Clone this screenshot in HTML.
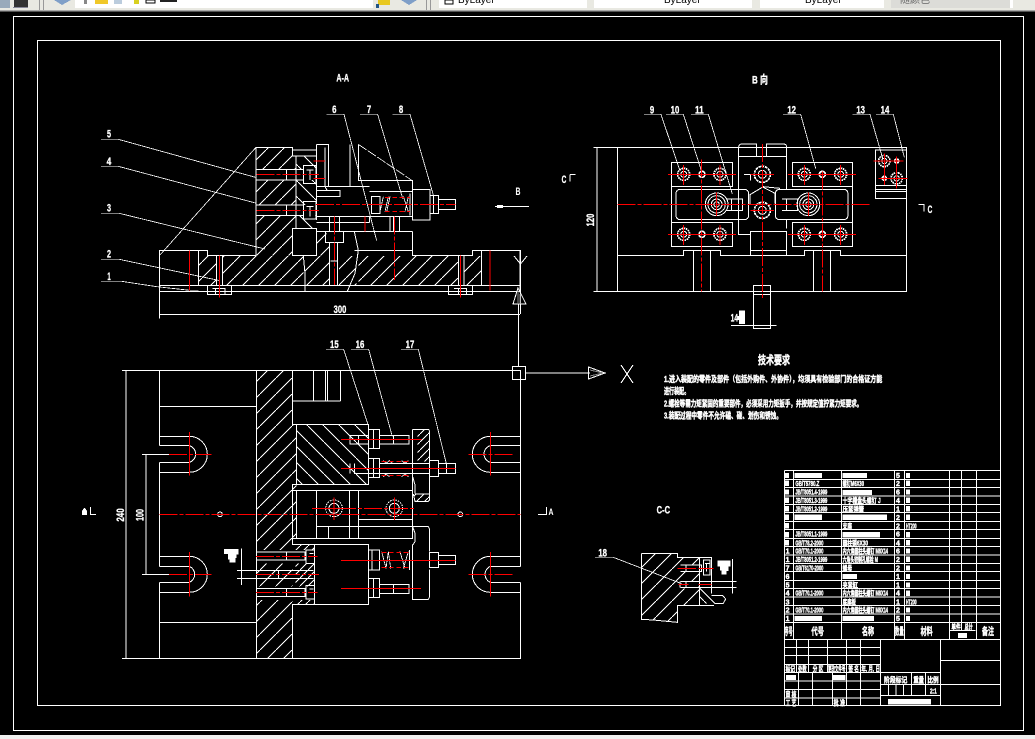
<!DOCTYPE html>
<html><head><meta charset="utf-8"><style>
html,body{margin:0;padding:0;background:#000;width:1035px;height:739px;overflow:hidden}
svg{display:block;position:absolute;left:0;top:0}
.a *{shape-rendering:crispEdges}
.w{stroke:#fff;stroke-width:3;fill:none}
.t{stroke:#fff;stroke-width:2.4;fill:none}
.r{stroke:#f00;stroke-width:3;fill:none}
.d{stroke:#f00;stroke-width:3;fill:none;stroke-dasharray:54 6 12 6}
.s{stroke:#f00;stroke-width:3;fill:none;stroke-dasharray:14 8}
.f{fill:#fff;stroke:none}
text{fill:#fff;font-family:"Liberation Sans","Noto Sans CJK SC",sans-serif;font-weight:bold}
.l{font-size:34px;text-anchor:middle;stroke:#fff;stroke-width:1}
.h{stroke:#fff;stroke-width:1.4}
</style></head><body>
<svg class="a" width="1035" height="739" viewBox="0 0 1035 739" xmlns="http://www.w3.org/2000/svg">
<defs>
<pattern id="h" patternUnits="userSpaceOnUse" width="48" height="48"><path d="M-3 51L51 -3" stroke="#fff" stroke-width="3"/></pattern>
<pattern id="g" patternUnits="userSpaceOnUse" width="48" height="48"><path d="M-3 -3L51 51" stroke="#fff" stroke-width="3"/></pattern>
<pattern id="i" patternUnits="userSpaceOnUse" width="24" height="24"><path d="M-3 27L27 -3" stroke="#fff" stroke-width="3"/></pattern>
</defs>
<rect width="1035" height="739" fill="#000"/>
<!-- toolbar -->
<rect width="1035" height="10" fill="#e9e9e2"/>
<rect y="10" width="1035" height="1" fill="#a8a8a8"/>
<rect y="11" width="1035" height="1" fill="#555"/>
<rect x="0" y="0" width="10" height="8" fill="#9ab"/><rect x="14" y="0" width="14" height="7" fill="#333"/>
<rect x="13" y="7" width="15" height="1" fill="#889"/>
<rect x="39" y="0" width="1" height="10" fill="#999"/><rect x="43" y="0" width="1" height="10" fill="#999"/><rect x="426" y="0" width="1" height="10" fill="#999"/><rect x="430" y="0" width="1" height="10" fill="#999"/>
<path d="M54 0H71L62 5Z" fill="#7f9fc8"/>
<rect x="75" y="0" width="298" height="8" fill="#fff"/>
<rect x="84" y="0" width="3" height="4" fill="#888"/><rect x="95" y="0" width="13" height="4" fill="#f0c828"/><rect x="114" y="0" width="8" height="4" fill="#bcd"/>
<rect x="134" y="0" width="5" height="4" fill="#d8d020"/><rect x="146" y="0" width="9" height="3" fill="#fff" stroke="#000"/>
<rect x="160" y="0" width="17" height="2" fill="#222"/>
<rect x="378" y="0" width="12" height="5" fill="#e8c820"/><rect x="376" y="4" width="3" height="4" fill="#258"/><path d="M401 0H417L409 5Z" fill="#7f9fc8"/>
<rect x="439" y="0" width="148" height="8" fill="#fff"/><rect x="594" y="0" width="158" height="8" fill="#fff"/><rect x="760" y="0" width="124" height="8" fill="#fff"/><rect x="891" y="0" width="119" height="8" fill="#dcdcd8"/><rect x="1010" y="0" width="3" height="8" fill="#fff"/>
<rect x="445" y="0" width="8" height="4" fill="#fff" stroke="#000"/>
<text x="458" y="3" style="font-size:10px;font-weight:normal;fill:#000">ByLayer</text>
<text x="664" y="3" style="font-size:10px;font-weight:normal;fill:#000">ByLayer</text>
<text x="805" y="3" style="font-size:10px;font-weight:normal;fill:#000">ByLayer</text>
<text x="900" y="3" style="font-size:10px;font-weight:normal;fill:#666">随颜色</text>
<!-- frames -->
<rect y="735" width="1035" height="4" fill="#f0f0f0"/>
<rect x="13.5" y="16.5" width="1010" height="714" fill="none" stroke="#fff"/>
<rect x="37.5" y="40.5" width="963" height="665" fill="none" stroke="#fff"/>

<!-- A-A VIEW -->
<g transform="translate(90 70) scale(.33333)">
<text class="l" x="758" y="35" textLength="38" lengthAdjust="spacingAndGlyphs">A-A</text>
<text class="l" x="57" y="203" textLength="12" lengthAdjust="spacingAndGlyphs">5</text><text class="l" x="57" y="285" textLength="14" lengthAdjust="spacingAndGlyphs">4</text><text class="l" x="57" y="425" textLength="12" lengthAdjust="spacingAndGlyphs">3</text><text class="l" x="57" y="563" textLength="12" lengthAdjust="spacingAndGlyphs">2</text><text class="l" x="57" y="630" textLength="10" lengthAdjust="spacingAndGlyphs">1</text>
<text class="l" x="733" y="129" textLength="13" lengthAdjust="spacingAndGlyphs">6</text><text class="l" x="837" y="129" textLength="13" lengthAdjust="spacingAndGlyphs">7</text><text class="l" x="933" y="129" textLength="13" lengthAdjust="spacingAndGlyphs">8</text>
<text class="l" x="750" y="729" textLength="38" lengthAdjust="spacingAndGlyphs">300</text>
<path class="t" d="M33 208H85L500 323M33 289H85L500 400M33 430H88L525 537M33 568H88L390 632M33 634H95L200 650L300 661H325M710 133H762L860 512M810 133H863L938 385M907 133H960L1030 375M208 557L498 232"/>
<path fill="url(#h)" d="M500 234H607V258H618V298H500ZM500 330H618V405H500ZM500 437H618V475H607V556H500ZM326 558H380V645H326ZM398 558H640V645H398ZM645 558H718V645H645ZM747 558H800V645H747ZM805 558H1105V645H805ZM1122 558H1175V645H1122ZM680 490H718V556H680Z"/>
<path fill="url(#g)" d="M619 259H680V298H619ZM619 330H680V405H619ZM619 437H680V475H619Z"/>
<path class="w" d="M208 745V541H352V557H498V232H607V258H680M607 232V240H680M618 258V475M498 298H640V330H498M498 405H640V437H498M590 298V330M590 405V437M607 475H680V557H607ZM680 223H716V350M680 223V450M705 232V350M640 286H678V340H640ZM640 395H678V447H640ZM650 300H670M650 410H670M660 300V330M660 410V440M680 350H838M680 362H750V380H680M705 350L712 362M680 458H838M680 440H838V458M680 485H967M780 223V350M805 223V332H967V358M838 365H967M838 440H967M967 358H1020V450H967ZM1020 376H1046V430H1020ZM1030 376V430M1046 388H1097V418H1046M845 380H870V430H845ZM960 370V436M900 440V485M910 440V485M928 440V485M718 440V485M748 440V485M707 485H760V518H707ZM718 518V646H722M742 518V646H745M722 573H742M967 485V557H1147V541H1290V664M793 485L805 541L795 610L772 664M793 541H967M640 557L645 610V664M1175 541V646M325 541V646M380 557V646M398 557V646M1105 557V646M1122 557V646M208 646H1290M208 664H1290M352 646V674H425V646M1075 646V674H1148V646M367 655H405V674M1092 655H1130V674M377 655V674M1105 655V674M208 733H1290"/>
<path class="t" d="M805 223L967 332" stroke-dasharray="30 4"/>
<path class="t" d="M880 380L870 425M895 380L885 425M900 380L890 425M940 380L955 425M955 380L945 425"/>
<path class="r" d="M298 541V661M388 557V683M1111 557V683M670 273H705M670 325H705M825 440V485M1200 541V661"/>
<path class="d" d="M500 313H687M500 422H687M678 403H1097M733 440V645M913 440V630"/>
<path class="s" d="M885 382H960M885 424H960"/>
</g>

<!-- PLAN VIEW -->
<g transform="translate(100 330) scale(.33333)">
<text class="l" x="703" y="54" textLength="26" lengthAdjust="spacingAndGlyphs">15</text><text class="l" x="780" y="54" textLength="26" lengthAdjust="spacingAndGlyphs">16</text><text class="l" x="930" y="54" textLength="26" lengthAdjust="spacingAndGlyphs">17</text>
<text class="l" transform="translate(72 555) rotate(-90)" textLength="40" lengthAdjust="spacingAndGlyphs">240</text>
<text class="l" transform="translate(130 555) rotate(-90)" textLength="36" lengthAdjust="spacingAndGlyphs">100</text>
<path class="t" d="M678 58H731L806 290M753 58H806L877 320M903 58H955L1040 405"/>
<path fill="url(#h)" d="M471 123H576V283H589V625H577V985H471Z"/>
<path fill="url(#g)" d="M590 285H805V462H590Z"/>
<path fill="url(#i)" d="M952 300H988V395H952ZM942 492H988V514H942ZM587 645H642V823H587Z"/>
<rect x="470" y="660" width="174" height="40" fill="#000"/><rect x="470" y="770" width="174" height="40" fill="#000"/>
<path class="w" d="M66 121H1262V319H1171M1262 347H1171M1262 397H1171M1262 427V319M1262 397V679M1262 427H1171M1262 679H1171M1262 709H1171M1262 757H1171M1262 787H1171M1262 757V985H66M1262 679V709M1262 787V757M1171 319A54 54 0 0 0 1171 427M1171 347A26 26 0 0 0 1171 397M1171 679A54 54 0 0 0 1171 787M1171 709A26 26 0 0 0 1171 757M178 121V347M178 397V709M178 757V985M178 319H268A54 54 0 0 1 268 427H178M178 347H268A26 26 0 0 1 268 397H178M178 679H268A54 54 0 0 1 268 787H178M178 709H268A26 26 0 0 1 268 757H178M178 319V347M178 397V427M178 679V709M178 757V787M178 229H470M178 877H470M470 121V985M78 121V985M138 373V733M126 373H207M126 733H207M577 121V283H806V463H577V643H806V823H577V985M589 283V463M640 121V213M677 121V213M683 121V213M722 121V213M577 213H722M577 481H938V625H577M589 481V625M650 481V625M686 590V625M748 481V625M775 481V625M650 589H775M775 568H938M775 589H938V625M938 298V590M643 643V823M470 666H615V690H470M470 775H615V800H470M560 666V690M560 775V800M618 660H644V700H618ZM618 767H644V807H618ZM628 670H640M628 777H640M411 721H640M411 745H640M425 655V765M536 722V744M806 298H838V356H806M820 298V356M838 316H927V342H838M881 316V342M927 316V342M750 316V342H806M750 316H806M776 316V342M806 385H838V443H806M820 385V443M763 400V430H989M750 400V430M838 400H989M989 392V440H1016V392H989M1016 400H1066V430H1016M1040 400V430M938 298H985L989 303V395M938 440L945 465V490M945 492H989V395M989 492V510L985 514H945L940 492M938 590H985L989 598V665M938 590L945 610V635L938 645V808H985L989 800V718M989 668H1016V712H989ZM1016 677H1067V703H1016M806 660H838V720H806ZM816 660V720M806 745H838V803H806ZM820 745V803M838 763H927V790H838M881 763V790M927 763V790M928 660V720"/>
<path class="t" d="M845 665L858 715L865 665L872 715M910 715L925 665M900 665L915 715M850 392L858 400L868 392L878 400M905 392L915 400L925 392M850 440L858 432L868 440M905 440L915 432L925 440"/>
<g class="w"><circle cx="702" cy="535" r="25" stroke-dasharray="5 3"/><circle cx="702" cy="535" r="15"/><circle cx="883" cy="535" r="25" stroke-dasharray="5 3"/><circle cx="883" cy="535" r="15"/><circle cx="360" cy="553" r="7"/><circle cx="1081" cy="553" r="7"/></g>
<path class="d" d="M178 553H1262M636 535H947"/>
<path class="r" d="M702 502V570M883 502V570M723 328H965M723 415H1066M723 691H1066M723 775H963M690 535H714M870 535H896"/>
<path class="d" d="M207 373H335M207 733H335M1105 373H1238M1105 733H1238M468 680H652M468 733H657M468 787H652"/>
<path class="r" d="M268 306V437M268 666V800M1171 306V437M1171 666V800"/>
<path class="s" d="M845 395H925M845 437H925M845 667H925M845 712H925"/>
<path class="f" d="M372 657H416V673H410V684H406V698H388V688H384V672H372Z"/>
</g>
<!-- section mark -->
<path d="M520.5 250V314" stroke="#fff" fill="none"/>
<path d="M518.5 304V366" stroke="#fff" fill="none"/>
<path d="M514 256L520.5 264L527 256" stroke="#fff" fill="none"/>
<path d="M518 288L513 304H526Z" stroke="#fff" fill="none"/>
<path d="M518 291V304M520 294V304" stroke="#888" fill="none"/>
<rect x="512.5" y="366.5" width="13" height="13" fill="none" stroke="#fff"/>
<path d="M526 373H590M588.5 367V379L605 373Z" stroke="#fff" fill="none"/>
<path d="M590 370L603 373L590 376" stroke="#888" fill="none"/>
<path d="M621 365L633 383M633 365L621 383" stroke="#fff" fill="none"/>
<path d="M495 206.5H529" stroke="#fff" fill="none"/><rect x="497" y="205" width="6" height="3" fill="#fff"/>
<text x="518" y="195" style="font-size:11px" text-anchor="middle" textLength="5" lengthAdjust="spacingAndGlyphs">B</text>
<path d="M90.5 507V514.5H96M538 514.5H546.5V507" stroke="#fff" fill="none"/>
<path d="M82 515H87V511L85 508H84L82 511Z" fill="#fff"/>
<text x="551" y="515" style="font-size:9px" text-anchor="middle" textLength="5" lengthAdjust="spacingAndGlyphs">A</text>

<!-- B VIEW -->
<g transform="translate(560 70) scale(.33333)">
<text class="l" x="600" y="40" textLength="48" lengthAdjust="spacingAndGlyphs">B 向</text>
<text class="l" x="276" y="130" textLength="13" lengthAdjust="spacingAndGlyphs">9</text><text class="l" x="345" y="130" textLength="26" lengthAdjust="spacingAndGlyphs">10</text><text class="l" x="418" y="130" textLength="26" lengthAdjust="spacingAndGlyphs">11</text><text class="l" x="695" y="130" textLength="26" lengthAdjust="spacingAndGlyphs">12</text><text class="l" x="902" y="130" textLength="26" lengthAdjust="spacingAndGlyphs">13</text><text class="l" x="975" y="130" textLength="26" lengthAdjust="spacingAndGlyphs">14</text>
<text class="l" x="12" y="339" textLength="14" lengthAdjust="spacingAndGlyphs">C</text><text class="l" x="1110" y="429" textLength="14" lengthAdjust="spacingAndGlyphs">C</text>
<text class="l" transform="translate(102 450) rotate(-90)" textLength="38" lengthAdjust="spacingAndGlyphs">120</text>
<text class="l" x="523" y="754" textLength="22" lengthAdjust="spacingAndGlyphs">14</text><path class="f" d="M537 722H555V762H537ZM533 738H537V750H533Z"/>
<path class="t" d="M252 133H303L360 303M318 133H370L425 305M393 133H445L517 372M669 133H722L767 295M877 133H930L968 265M948 133H1000L1033 262"/>
<path class="w" d="M100 232H1040V664H100M172 232V664M111 232V664M172 556H370V541H481V556H733V541H841V556H1040M400 541V664M451 541V664M760 541V664M811 541V664M334 277H518V350H334ZM334 350V530H518V458H334M697 277H878V350H697ZM878 350V530H697V458H878M348 372V435Q348 449 362 449H552Q566 449 566 435V372Q566 358 552 358H362Q348 358 348 372ZM646 372V435Q646 449 660 449H850Q864 449 864 435V372Q864 358 850 358H660Q646 358 646 372ZM536 232V478M680 232V358M680 449V476M536 259H680M536 478V494H571M571 484H680V556H571ZM571 541H680M536 232Q536 222 546 222H590V259M620 259V222H670Q680 222 680 232M580 646H632V775H580ZM580 673H632M513 766H650M946 240H1040V386H946ZM946 346H1040M946 358H1040M946 365H1040M500 387H548V421H500M515 387V421M548 395V413M666 387H712V421H666M680 387V421M570 374L610 350L660 355M570 374V405M645 400V370L610 352M552 313H572V332M30 313H47M30 313V335M1075 403H1092V425"/>
<g class="w">
<circle cx="470" cy="403" r="34"/><circle cx="470" cy="403" r="26"/><circle cx="470" cy="403" r="16"/><circle cx="470" cy="403" r="8"/>
<circle cx="745" cy="403" r="34"/><circle cx="745" cy="403" r="26"/><circle cx="745" cy="403" r="16"/><circle cx="745" cy="403" r="8"/>
<g stroke-width="5">
<circle cx="371" cy="313" r="18" stroke-dasharray="5 2"/><circle cx="480" cy="313" r="18" stroke-dasharray="5 2"/><circle cx="371" cy="493" r="18" stroke-dasharray="5 2"/><circle cx="480" cy="493" r="18" stroke-dasharray="5 2"/>
<circle cx="733" cy="313" r="18" stroke-dasharray="5 2"/><circle cx="842" cy="313" r="18" stroke-dasharray="5 2"/><circle cx="733" cy="493" r="18" stroke-dasharray="5 2"/><circle cx="842" cy="493" r="18" stroke-dasharray="5 2"/>
<circle cx="426" cy="313" r="9"/><circle cx="426" cy="493" r="9"/><circle cx="787" cy="313" r="9"/><circle cx="787" cy="493" r="9"/>
<circle cx="607" cy="313" r="24" stroke-dasharray="8 2"/><circle cx="607" cy="421" r="24" stroke-dasharray="8 2"/>
<circle cx="973" cy="273" r="17" stroke-dasharray="5 2"/><circle cx="1010" cy="325" r="17" stroke-dasharray="5 2"/><circle cx="1010" cy="273" r="6"/><circle cx="973" cy="325" r="6"/></g>
<circle cx="371" cy="313" r="9"/><circle cx="480" cy="313" r="9"/><circle cx="371" cy="493" r="9"/><circle cx="480" cy="493" r="9"/><circle cx="733" cy="313" r="9"/><circle cx="842" cy="313" r="9"/><circle cx="733" cy="493" r="9"/><circle cx="842" cy="493" r="9"/><circle cx="607" cy="313" r="12"/><circle cx="607" cy="421" r="12"/><circle cx="973" cy="273" r="8"/><circle cx="1010" cy="325" r="8"/>
</g>
<path class="d" d="M172 403H935M425 268V664M787 305V664M607 222V690"/>
<path class="r" d="M324 313H528M324 493H528M684 313H888M684 493H888M371 285V345M480 285V345M371 465V525M480 465V525M733 285V345M842 285V345M733 465V525M842 465V525M572 313H642M572 421H642M940 273H1030M955 325H1043M973 250V345M1010 260V355M470 368V438M745 368V438"/>
</g>

<!-- TECH + C-C -->
<g transform="translate(560 345) scale(.33333)">
<text class="h" x="642" y="57" style="font-size:34px" text-anchor="middle" textLength="96" lengthAdjust="spacingAndGlyphs">技术要求</text>
<g class="h" style="font-size:25px">
<text x="312" y="111" textLength="655" lengthAdjust="spacingAndGlyphs">1.进入装配的零件及部件（包括外购件、外协件），均须具有检验部门的合格证方能</text>
<text x="312" y="147" textLength="76" lengthAdjust="spacingAndGlyphs">进行装配。</text>
<text x="312" y="185" textLength="595" lengthAdjust="spacingAndGlyphs">2.螺栓等需力矩紧固的重要部件，必须采用力矩扳手，并按规定值拧紧力矩要求。</text>
<text x="312" y="221" textLength="354" lengthAdjust="spacingAndGlyphs">3.装配过程中零件不允许磕、碰、划伤和锈蚀。</text>
</g>
<text class="l" x="310" y="506" textLength="40" lengthAdjust="spacingAndGlyphs">C-C</text>
<text class="l" x="128" y="634" textLength="26" lengthAdjust="spacingAndGlyphs">18</text>
<path fill="url(#h)" d="M246 627H352V638H418V660H360V680H420V708H355V730H418V780H352V830L280 824L246 822Z"/>
<path fill="url(#g)" d="M418 725L465 775H418Z"/>
<path class="t" d="M105 637H160L365 716"/>
<path class="w" d="M245 625H352V637H455V745M245 625V823L280 825L352 832V782H462M418 637V782M430 645H450V690H430ZM435 655H448M440 655V680M362 660H425V680H362M362 710H455V728H362M378 660V680M378 710V728M415 725L465 775L490 775L497 762L488 752H455M518 642V745M455 710H530M455 727H530M360 710V728"/>
<path class="r" d="M352 670H408M415 670H460M355 719H385M415 719H455"/>
<path class="f" d="M472 646H512V664H505V678H500V688H484V676H480V664H472Z"/>
</g>

<!-- TITLE BLOCK -->
<g transform="translate(770 460) scale(.33333)">
<path class="w" d="M43 31H690M43 58H690M43 83H690M43 108H690M43 133H690M43 158H690M43 184H690M43 209H690M43 235H690M43 260H690M43 285H690M43 310H690M43 335H690M43 361H690M43 386H690M43 411H690M43 437H690M43 462H690M43 488H690M43 538H690M43 31V738M70 31V538M214 31V538M373 31V538M403 31V538M538 31V538M574 31V512M619 31V538M540 512H617M43 563H332M43 587H332M43 613H332M43 637H511M43 663H332M43 688H332M43 714H332M79 538V637M116 538V637M172 538V637M229 538V637M271 538V637M85 637V738M127 637V738M187 637V738M229 637V738M271 637V738M332 538V738M511 538V738M332 673H511M332 706H511M511 601H690M511 673H690M424 637V706M466 637V706M355 673V706M378 673V706M401 673V706"/>
<g class="f">
<rect x="74" y="39" width="82" height="15"/><rect x="218" y="39" width="73" height="15"/><rect x="408" y="39" width="12" height="15"/><rect x="45" y="39" width="12" height="15"/>
<rect x="45" y="62" width="12" height="16"/><rect x="408" y="62" width="12" height="16"/>
<rect x="218" y="90" width="88" height="15"/><rect x="45" y="88" width="12" height="16"/><rect x="408" y="88" width="12" height="16"/>
<rect x="45" y="113" width="12" height="16"/><rect x="408" y="113" width="12" height="16"/>
<rect x="45" y="138" width="12" height="16"/><rect x="408" y="138" width="12" height="16"/>
<rect x="74" y="164" width="82" height="16"/><rect x="218" y="164" width="133" height="16"/><rect x="408" y="164" width="12" height="16"/><rect x="45" y="164" width="12" height="16"/>
<rect x="45" y="189" width="12" height="16"/>
<rect x="218" y="216" width="112" height="16"/><rect x="45" y="216" width="12" height="16"/><rect x="408" y="216" width="12" height="16"/>
<rect x="45" y="240" width="12" height="16"/><rect x="408" y="240" width="12" height="16"/>
<rect x="408" y="265" width="12" height="16"/><rect x="408" y="290" width="12" height="16"/><rect x="408" y="316" width="12" height="16"/>
<rect x="218" y="342" width="43" height="15"/><rect x="408" y="342" width="12" height="15"/><rect x="408" y="367" width="12" height="15"/><rect x="408" y="391" width="12" height="17"/><rect x="408" y="442" width="12" height="16"/>
<rect x="74" y="468" width="82" height="15"/><rect x="218" y="468" width="94" height="15"/><rect x="408" y="468" width="12" height="15"/>
<rect x="564" y="519" width="27" height="15"/>
<rect x="48" y="645" width="30" height="15"/><rect x="189" y="645" width="37" height="15"/><rect x="354" y="717" width="129" height="16"/>
</g>
<g class="h" style="font-size:21px">
<text x="76" y="78" textLength="72" lengthAdjust="spacingAndGlyphs">GB/T5780.Z</text><text x="218" y="78" textLength="64" lengthAdjust="spacingAndGlyphs">螺钉M6X30</text>
<text x="76" y="103" textLength="96" lengthAdjust="spacingAndGlyphs">JB/T8051.4-1999</text>
<text x="76" y="129" textLength="96" lengthAdjust="spacingAndGlyphs">JB/T8051.3-1999</text><text x="218" y="129" textLength="114" lengthAdjust="spacingAndGlyphs">十字槽盘头螺钉 J</text>
<text x="76" y="154" textLength="96" lengthAdjust="spacingAndGlyphs">JB/T8051.2-1999</text><text x="218" y="154" textLength="64" lengthAdjust="spacingAndGlyphs">压紧弹簧</text>
<text x="218" y="205" textLength="28" lengthAdjust="spacingAndGlyphs">支座</text><text x="408" y="205" textLength="32" lengthAdjust="spacingAndGlyphs">HT200</text>
<text x="76" y="230" textLength="96" lengthAdjust="spacingAndGlyphs">JB/T8051.1-1999</text>
<text x="76" y="256" textLength="84" lengthAdjust="spacingAndGlyphs">GB/T78.2-2000</text><text x="218" y="256" textLength="76" lengthAdjust="spacingAndGlyphs">圆柱销6X30</text>
<text x="76" y="281" textLength="84" lengthAdjust="spacingAndGlyphs">GB/T70.1-2000</text><text x="218" y="281" textLength="136" lengthAdjust="spacingAndGlyphs">内六角圆柱头螺钉 M8X14</text>
<text x="76" y="306" textLength="96" lengthAdjust="spacingAndGlyphs">JB/T8051.2-1999</text><text x="218" y="306" textLength="106" lengthAdjust="spacingAndGlyphs">六角头铰制孔螺栓 M</text>
<text x="76" y="332" textLength="84" lengthAdjust="spacingAndGlyphs">GB/T6170-2000</text><text x="218" y="332" textLength="28" lengthAdjust="spacingAndGlyphs">螺母</text>
<text x="218" y="382" textLength="46" lengthAdjust="spacingAndGlyphs">夹紧缸</text>
<text x="76" y="407" textLength="84" lengthAdjust="spacingAndGlyphs">GB/T70.1-2000</text><text x="218" y="407" textLength="136" lengthAdjust="spacingAndGlyphs">内六角圆柱头螺钉 M8X14</text>
<text x="218" y="433" textLength="40" lengthAdjust="spacingAndGlyphs">底座板</text><text x="408" y="433" textLength="32" lengthAdjust="spacingAndGlyphs">HT200</text>
<text x="76" y="458" textLength="84" lengthAdjust="spacingAndGlyphs">GB/T70.1-2000</text><text x="218" y="458" textLength="136" lengthAdjust="spacingAndGlyphs">内六角圆柱头螺钉 M8X14</text>
<text x="378" y="54">5</text><text x="378" y="78">2</text><text x="378" y="103">6</text><text x="378" y="129">4</text><text x="378" y="154">1</text><text x="378" y="180">2</text><text x="378" y="205">2</text><text x="378" y="230">6</text><text x="378" y="256">4</text><text x="378" y="281">6</text><text x="378" y="306">2</text><text x="378" y="332">2</text><text x="378" y="357">1</text><text x="378" y="382">1</text><text x="378" y="407">4</text><text x="378" y="433">1</text><text x="378" y="458">2</text><text x="378" y="483">5</text>
<text x="47" y="281">1</text><text x="47" y="306">1</text><text x="47" y="332">7</text><text x="47" y="357">6</text><text x="47" y="382">5</text><text x="47" y="407">4</text><text x="47" y="433">3</text><text x="47" y="458">2</text><text x="47" y="483">1</text>
</g>
<g class="h" style="font-size:30px">
<text x="44" y="525" textLength="24" lengthAdjust="spacingAndGlyphs">序号</text>
<text x="124" y="525" textLength="38" lengthAdjust="spacingAndGlyphs">代号</text>
<text x="276" y="525" textLength="36" lengthAdjust="spacingAndGlyphs">名称</text>
<text x="375" y="525" textLength="26" lengthAdjust="spacingAndGlyphs">数量</text>
<text x="452" y="525" textLength="36" lengthAdjust="spacingAndGlyphs">材料</text>
<text x="636" y="525" textLength="36" lengthAdjust="spacingAndGlyphs">备注</text>
</g>
<g class="h" style="font-size:22px">
<text x="544" y="508" textLength="28" lengthAdjust="spacingAndGlyphs">单件</text><text x="584" y="508" textLength="24" lengthAdjust="spacingAndGlyphs">总计</text>
<text x="47" y="634" textLength="28" lengthAdjust="spacingAndGlyphs">标记</text><text x="84" y="634" textLength="26" lengthAdjust="spacingAndGlyphs">处数</text><text x="128" y="634" textLength="32" lengthAdjust="spacingAndGlyphs">分 区</text><text x="174" y="634" textLength="52" lengthAdjust="spacingAndGlyphs">更改文件号</text><text x="235" y="634" textLength="32" lengthAdjust="spacingAndGlyphs">签 名</text><text x="274" y="634" textLength="56" lengthAdjust="spacingAndGlyphs">年. 月. 日</text>
<text x="47" y="711" textLength="32" lengthAdjust="spacingAndGlyphs">审 核</text><text x="47" y="736" textLength="32" lengthAdjust="spacingAndGlyphs">工 艺</text><text x="191" y="736" textLength="34" lengthAdjust="spacingAndGlyphs">批 准</text>
<text x="342" y="667" textLength="70" lengthAdjust="spacingAndGlyphs">阶段标记</text><text x="430" y="667" textLength="32" lengthAdjust="spacingAndGlyphs">重量</text><text x="472" y="667" textLength="34" lengthAdjust="spacingAndGlyphs">比例</text>
<text x="480" y="701" textLength="20" lengthAdjust="spacingAndGlyphs">2:1</text>
</g>
</g>
</svg>
</body></html>
